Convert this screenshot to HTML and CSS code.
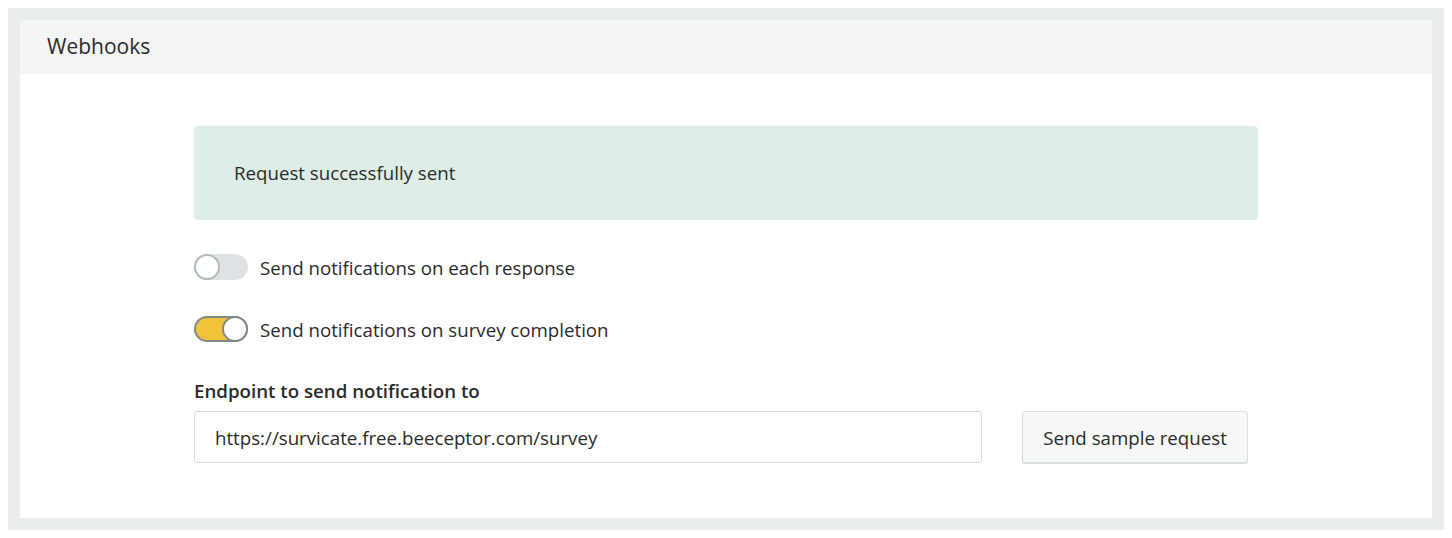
FILE: index.html
```html
<!DOCTYPE html>
<html>

<head>
    <title>Webhooks</title>
    <link rel="stylesheet" href="styles.css">
</head>

<body>
    <div class="panel">
        <div class="panel-header">Webhooks</div>

        <div class="panel-body">
            <div class="alert">Request successfully sent</div>

            <label class="switch-row">
                <span class="switch"><span class="knob"></span></span>
                Send notifications on each response
            </label>

            <label class="switch-row">
                <span class="switch on"><span class="knob"></span></span>
                Send notifications on survey completion
            </label>

            <div class="field-label">Endpoint to send notification to</div>
            <div class="field-row">
                <input type="text" class="endpoint" value="https://survicate.free.beeceptor.com/survey">
                <button class="btn">Send sample request</button>
            </div>
        </div>
    </div>
</body>

</html>
```

FILE: styles.css
```css
body {
    font-family: "Open Sans", sans-serif;
    color: #2b2b2b;
    margin: 8px;
    background-color: #fff;
}

.panel {
    border: 12px solid #e9eded;
    height: 498px;
    display: flex;
    flex-direction: column;
}

.panel-header {
    background-color: #f4f6f5;
    height: 54px;
    padding-left: 27px;
    display: flex;
    align-items: center;
    font-size: 21px;
    padding-bottom: 2px;
    box-sizing: border-box;
}

.panel-body {
    padding: 52px 174px 0 174px;
}

.alert {
    background-color: #deeee6;
    border-radius: 4px;
    height: 94px;
    padding-left: 40px;
    display: flex;
    align-items: center;
    font-size: 18.7px;
    padding-bottom: 2px;
    box-sizing: border-box;
}

.switch-row {
    display: flex;
    align-items: center;
    gap: 12px;
    font-size: 18.7px;
    margin-top: 34px;
    height: 26px;
}

.switch-row + .switch-row {
    margin-top: 36px;
}

.switch {
    width: 54px;
    height: 26px;
    box-sizing: border-box;
    border-radius: 13px;
    background-color: #dde2e4;
    position: relative;
    flex-shrink: 0;
}

.knob {
    position: absolute;
    left: 0;
    top: 0;
    width: 26px;
    height: 26px;
    box-sizing: border-box;
    border-radius: 50%;
    background-color: #fff;
    border: 2px solid #aebcba;
}

.switch.on {
    background-color: #f0c33a;
    border: 2px solid #7f8b89;
}

.switch.on .knob {
    left: auto;
    right: -2px;
    top: -2px;
    border-color: #7f8b89;
}

.field-label {
    font-weight: 600;
    font-size: 18.7px;
    margin-top: 36px;
}

.field-row {
    display: flex;
    align-items: center;
    margin-top: 8px;
}

.endpoint {
    width: 788px;
    height: 52px;
    flex-shrink: 0;
    box-sizing: border-box;
    border: 1px solid #d7dcdc;
    border-radius: 3px;
    padding: 0 20px;
    font-family: "Open Sans", sans-serif;
    font-size: 18.7px;
    color: #2b2b2b;
}

.btn {
    margin-left: 40px;
    width: 226px;
    height: 52px;
    flex-shrink: 0;
    border: 1px solid #d9dede;
    border-radius: 3px;
    box-shadow: 0 1px 0 #d9dede;
    background-color: #f7f8f8;
    font-family: "Open Sans", sans-serif;
    font-size: 18.7px;
    color: #2b2b2b;
}
```
